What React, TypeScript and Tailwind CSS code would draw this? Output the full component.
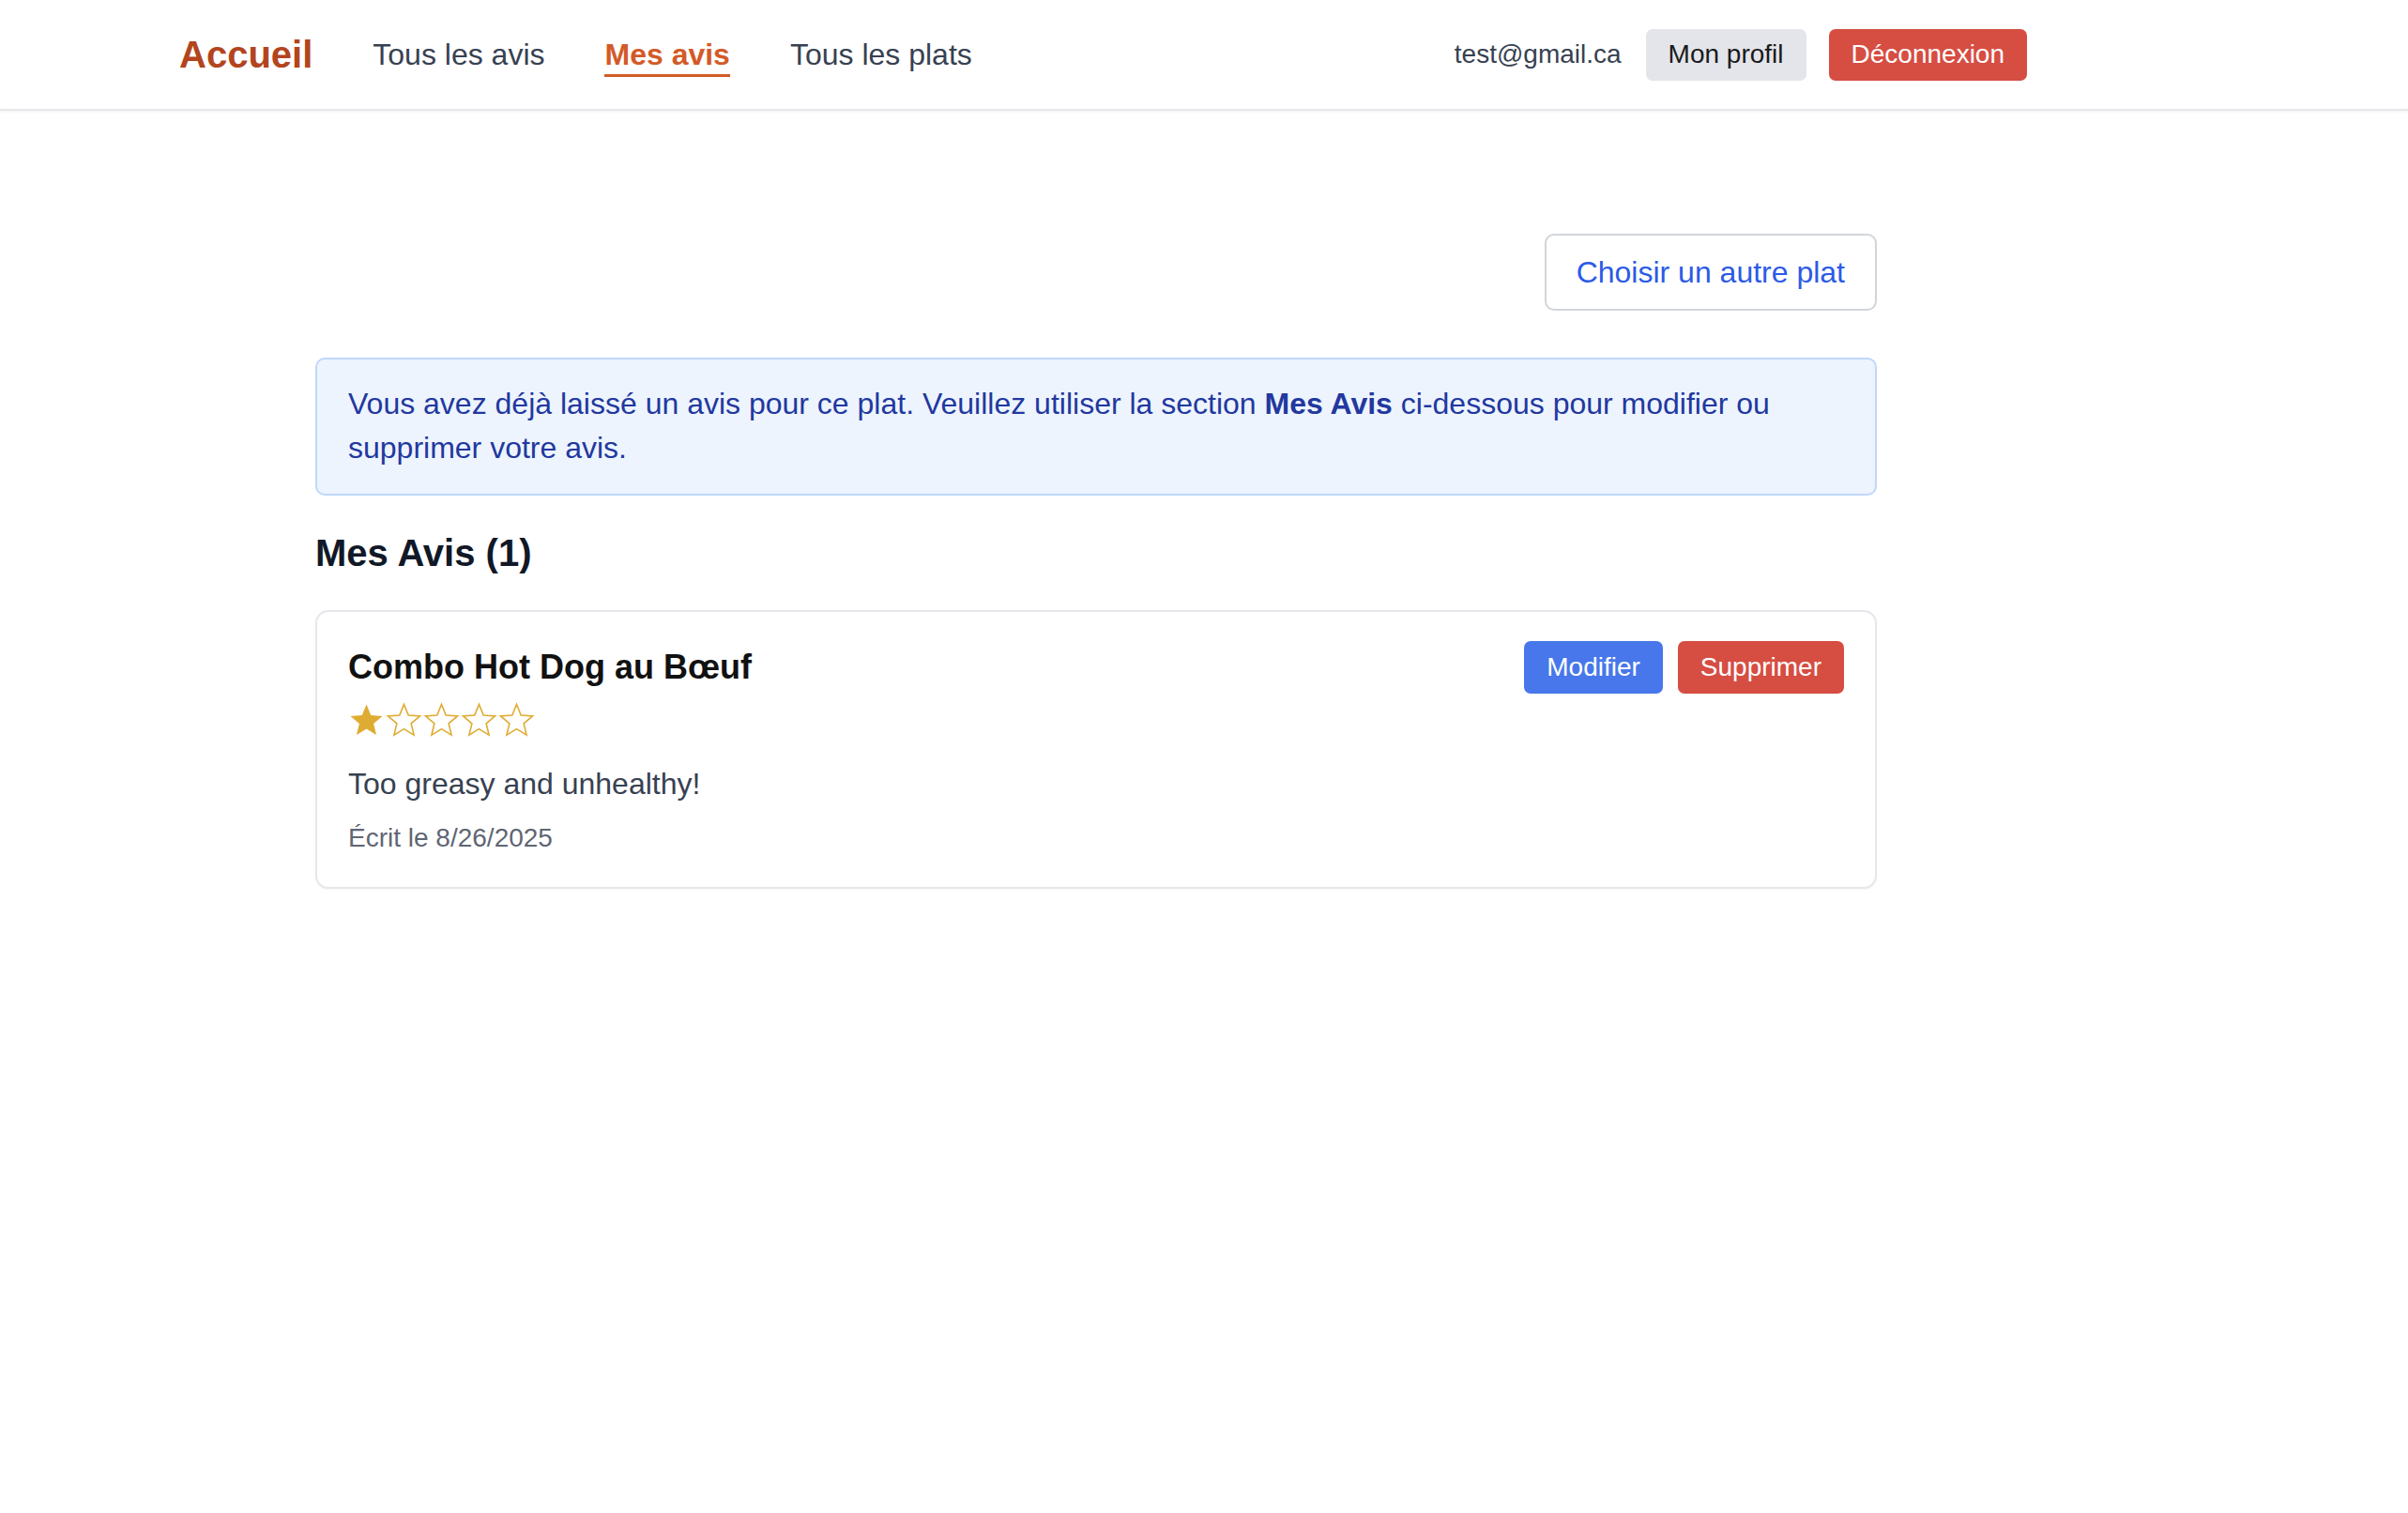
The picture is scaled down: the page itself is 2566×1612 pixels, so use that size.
import React from "react";

const STAR = "12,1.5 14.9,8.6 22.5,9.2 16.7,14.1 18.5,21.6 12,17.6 5.5,21.6 7.3,14.1 1.5,9.2 9.1,8.6";

function Star({ filled }: { filled: boolean }) {
  return (
    <svg width="39" height="38" viewBox="0 0 24 23.4" className="block">
      <polygon
        points={STAR}
        fill={filled ? "#dfac33" : "none"}
        stroke="#dfac33"
        strokeWidth={filled ? 0 : 1}
        strokeLinejoin="miter"
      />
    </svg>
  );
}

export default function App() {
  return (
    <div className="min-h-screen bg-white font-['Liberation_Sans',Arial,sans-serif]">
      <header className="flex h-[118px] items-center justify-between border-b-2 border-[#e5e7eb] pl-[191px] pr-[406px] shadow-[0_1px_3px_rgba(0,0,0,0.06)]">
        <nav className="flex items-center gap-[64px]">
          <a className="text-[40px] font-bold leading-[46px] text-[#b3451e]">Accueil</a>
          <a className="mt-[6px] border-b-[3px] border-transparent pb-[3px] text-[32px] leading-[36px] text-[#374151]">
            Tous les avis
          </a>
          <a className="mt-[6px] border-b-[3px] border-[#d35a27] pb-[3px] text-[32px] font-bold leading-[36px] text-[#d35a27]">
            Mes avis
          </a>
          <a className="mt-[6px] border-b-[3px] border-transparent pb-[3px] text-[32px] leading-[36px] text-[#374151]">
            Tous les plats
          </a>
        </nav>
        <div className="flex items-center">
          <span className="text-[28px] leading-[42px] text-[#374151]">test@gmail.ca</span>
          <button className="ml-[26px] flex h-[55px] items-center rounded-[7px] bg-[#e3e5ea] px-[24px] text-[28px] text-[#1a1a1a]">
            Mon profil
          </button>
          <button className="ml-[24px] flex h-[55px] items-center rounded-[7px] bg-[#d64d42] px-[24px] text-[28px] text-white">
            Déconnexion
          </button>
        </div>
      </header>

      <main className="ml-[336px] w-[1664px] pt-[131px]">
        <div className="flex justify-end">
          <button className="flex h-[82px] items-center rounded-[10px] border-2 border-[#d1d5db] bg-white px-[32px] text-[32px] text-[#2c5ae6]">
            Choisir un autre plat
          </button>
        </div>

        <div className="mt-[50px] rounded-[10px] border-2 border-[#bfd7fb] bg-[#edf4fe] px-[33px] py-[24px] text-[32px] leading-[47.25px] text-[#22389f]">
          Vous avez déjà laissé un avis pour ce plat. Veuillez utiliser la section <strong>Mes Avis</strong> ci-dessous pour modifier ou supprimer votre avis.
        </div>

        <h2 className="mb-[37px] mt-[37px] text-[40px] font-bold leading-[48px] text-[#111827]">Mes Avis (1)</h2>

        <div className="rounded-[14px] border-2 border-[#e5e7eb] bg-white px-[33px] pb-[31px] pt-[31px] shadow-[0_1px_2px_rgba(0,0,0,0.04)]">
          <div className="flex h-[56px] items-center justify-between">
            <h3 className="text-[36px] font-bold leading-[42px] text-[#111111]">Combo Hot Dog au Bœuf</h3>
            <div className="flex items-center gap-[16px]">
              <button className="flex h-[56px] items-center rounded-[7px] bg-[#4777eb] px-[24px] text-[28px] text-white">
                Modifier
              </button>
              <button className="flex h-[56px] items-center rounded-[7px] bg-[#d64d42] px-[24px] text-[28px] text-white">
                Supprimer
              </button>
            </div>
          </div>
          <div className="mt-[9px] flex items-center gap-[1px]">
            <Star filled />
            <Star filled={false} />
            <Star filled={false} />
            <Star filled={false} />
            <Star filled={false} />
          </div>
          <p className="mt-[26px] text-[32px] leading-[47.25px] text-[#374151]">Too greasy and unhealthy!</p>
          <p className="mt-[13px] text-[28px] leading-[42px] text-[#5f6673]">Écrit le 8/26/2025</p>
        </div>
      </main>
    </div>
  );
}
